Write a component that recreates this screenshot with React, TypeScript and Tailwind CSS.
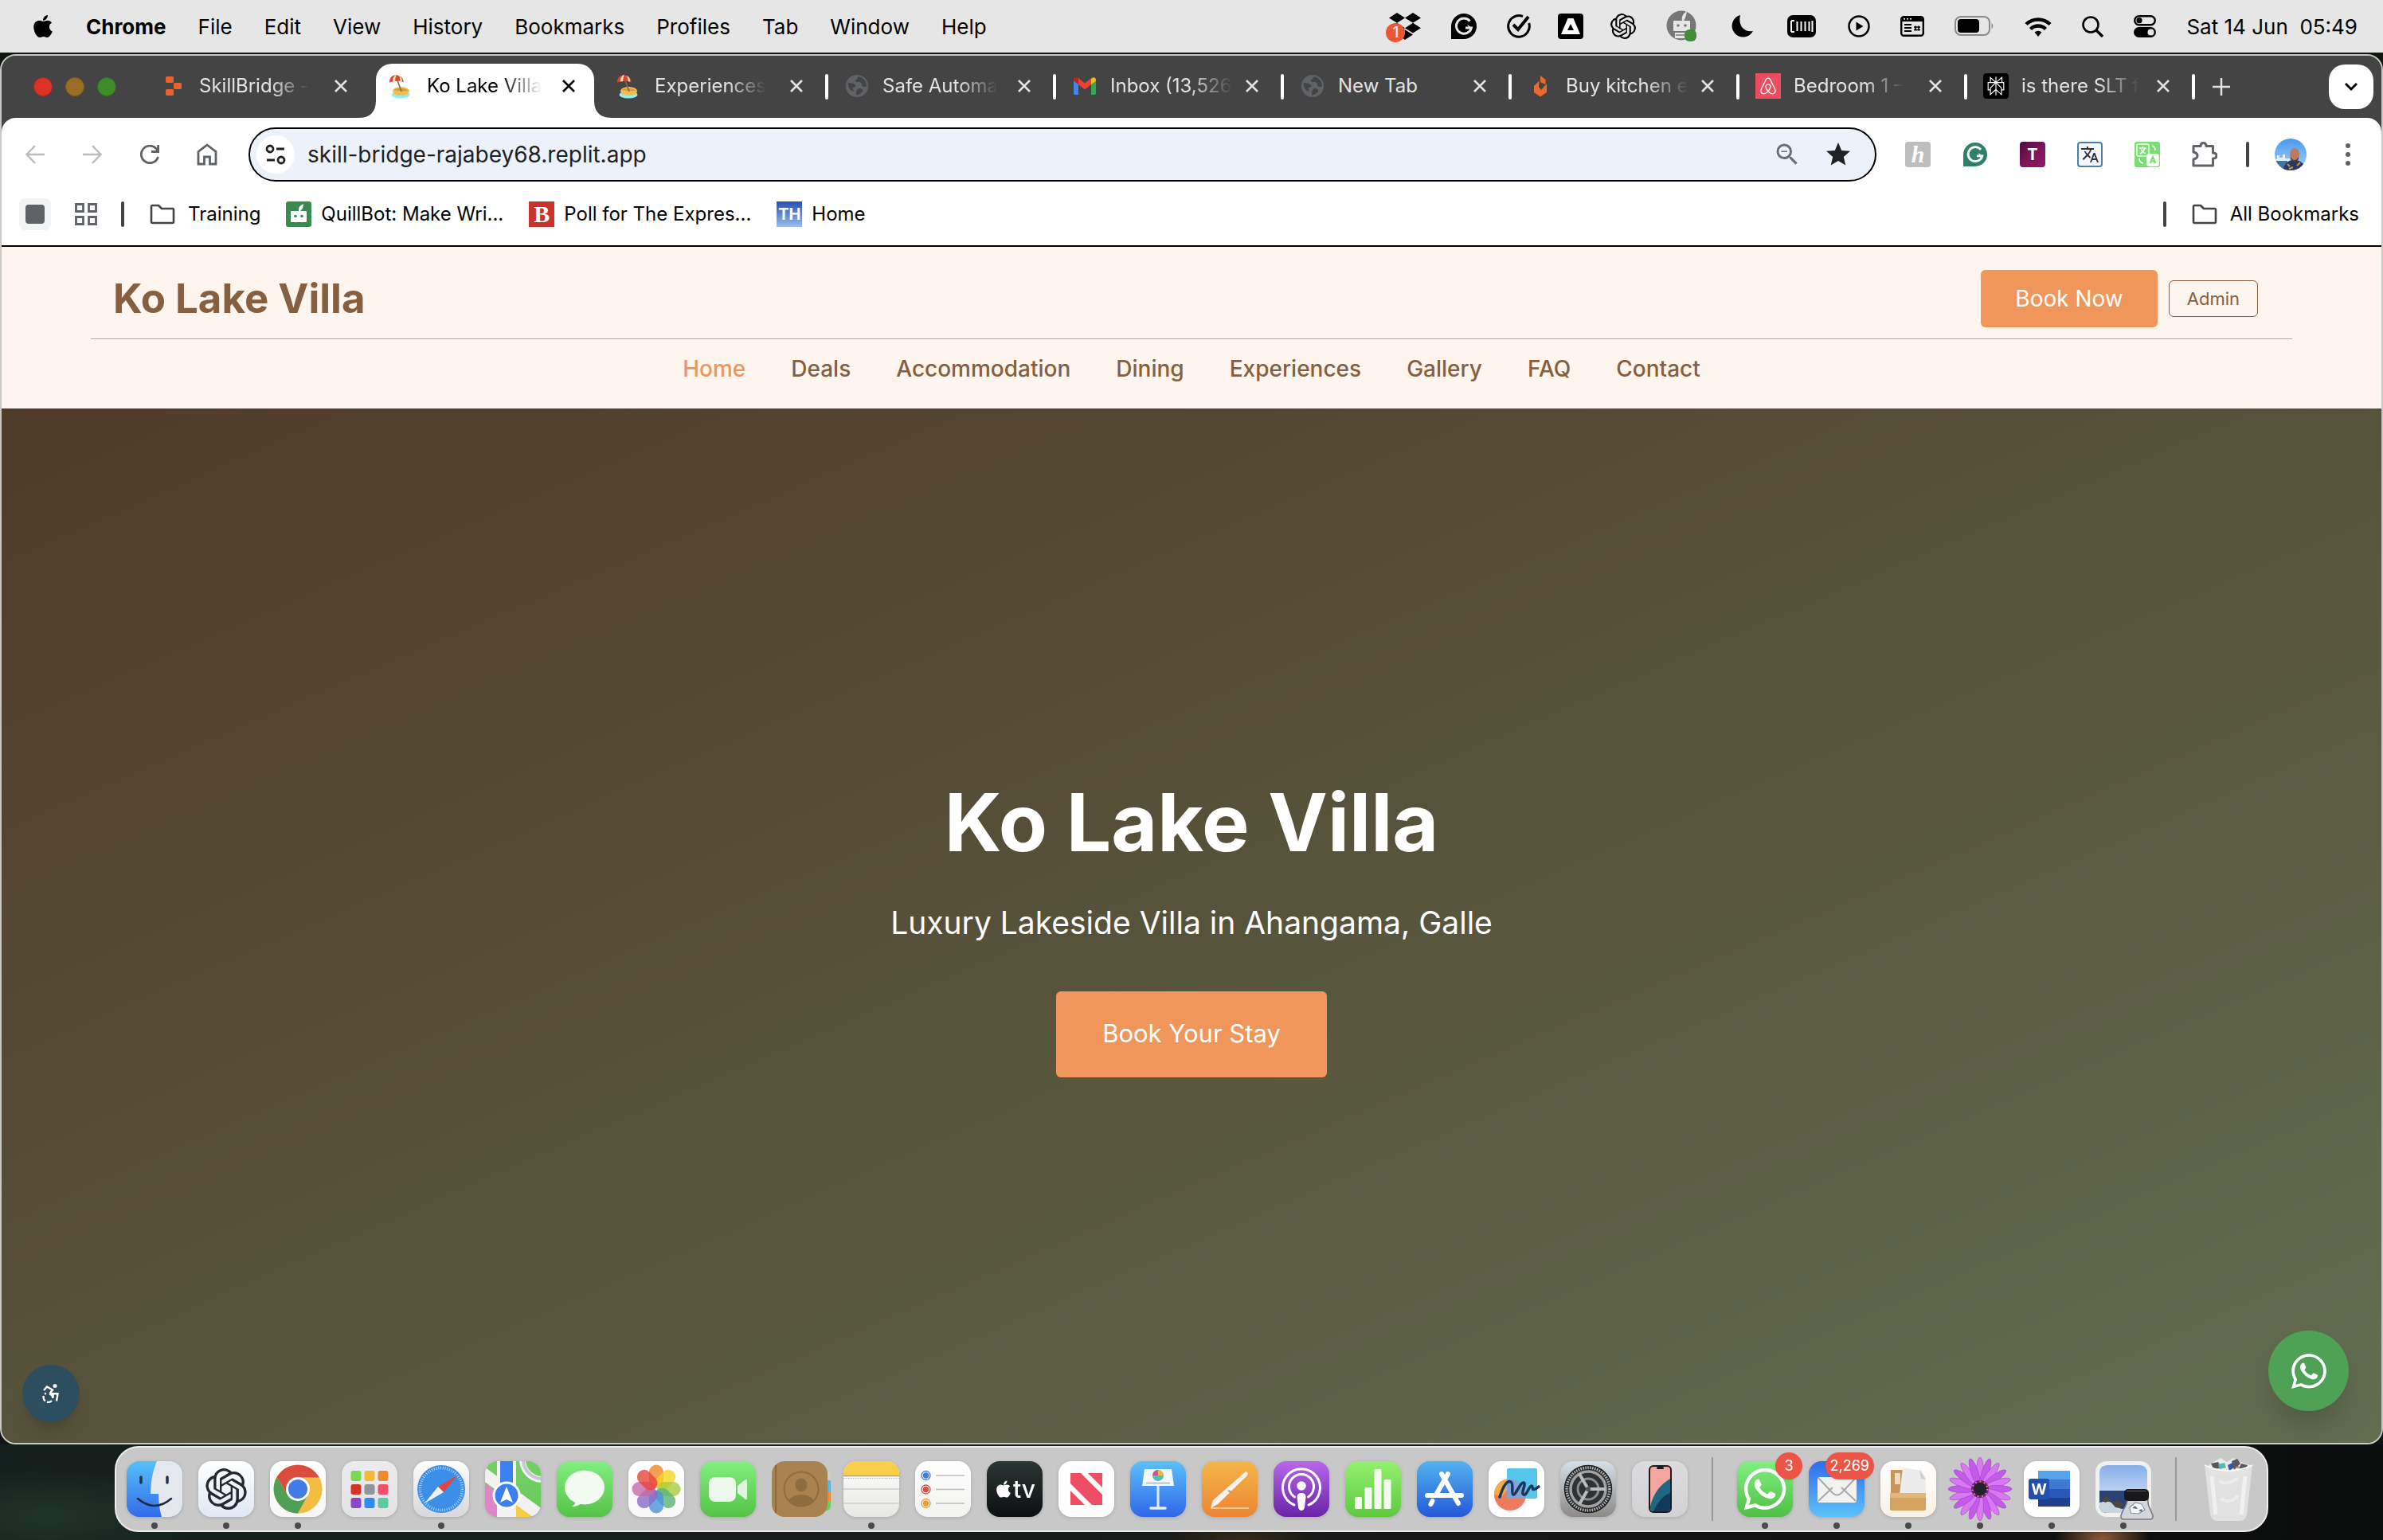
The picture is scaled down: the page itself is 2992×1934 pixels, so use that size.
import React from "react";
import { FaApple, FaWhatsapp, FaAirbnb, FaDropbox } from "react-icons/fa";
import { SiOpenai, SiPerplexity } from "react-icons/si";
import { MdZoomOut, MdStar, MdTranslate } from "react-icons/md";

type Kids = { children?: React.ReactNode };

const menus = ["File", "Edit", "View", "History", "Bookmarks", "Profiles", "Tab", "Window", "Help"];

/* ---------- menu bar ---------- */

function GrammarlyMark({ className, fill, ink }: { className: string; fill: string; ink: string }) {
  return (
    <svg viewBox="0 0 32 32" className={className}>
      <path d="M0 16a16 16 0 1 1 16 16H0z" fill={fill} />
      <path d="M23.5 9.5A9.6 9.6 0 1 0 25.4 18H18" fill="none" stroke={ink} strokeWidth="3" />
      <path d="M20 13.5l6 4.5-1 5z" fill={ink} />
    </svg>
  );
}

function RobotHead() {
  return (
    <svg viewBox="0 0 38 40" className="h-10 w-[38px]">
      <circle cx="19" cy="19" r="18.5" fill="#777" />
      <path d="M20 13c-1-5 1-9 6-12-1 6-2 9-4 12z" fill="#e6e6e6" />
      <rect x="9" y="13" width="21" height="13" rx="1" fill="#e6e6e6" />
      <circle cx="15" cy="19" r="1.8" fill="#777" />
      <circle cx="24" cy="19" r="1.8" fill="#777" />
      <path d="M11 28h16v7H11z" fill="#e6e6e6" />
      <path d="M12 31h14" stroke="#777" strokeWidth="1.5" />
      <rect x="23" y="24" width="15" height="15" rx="6" fill="#3f8f36" />
    </svg>
  );
}

function MenuBar() {
  return (
    <header className="flex h-[66px] shrink-0 items-center justify-between bg-[#e6e6e6] pr-8 pl-10 text-[26px] font-medium text-black">
      <nav className="flex items-center gap-10">
        <button aria-label="Apple menu" className="flex w-7 justify-center">
          <FaApple className="size-8 shrink-0" />
        </button>
        <button className="font-bold">Chrome</button>
        {menus.map((m) => (
          <button key={m} className="font-normal">{m}</button>
        ))}
      </nav>
      <div className="flex items-center gap-[38px]">
        <span className="relative flex w-10 justify-center">
          <FaDropbox className="size-10" />
          <span className="absolute top-4 -left-1 flex size-6 items-center justify-center rounded-full bg-[#ee5533] text-lg font-medium text-white">1</span>
        </span>
        <GrammarlyMark className="size-8" fill="#000" ink="#e6e6e6" />
        <svg viewBox="0 0 30 30" className="size-[30px]" fill="none" stroke="#000" strokeWidth="3">
          <path d="M20 2.6A13.3 13.3 0 1 0 27.7 11" />
          <path d="M8 13l6 6L27 3" strokeWidth="4" />
        </svg>
        <svg viewBox="0 0 32 32" className="-ml-1 size-8">
          <rect width="32" height="32" rx="4" fill="#000" />
          <path d="M12.5 6h7L28 26H4z" fill="#fff" />
          <path d="M16 13l4 8h-8z" fill="#000" />
        </svg>
        <SiOpenai className="-ml-1 size-8" />
        <RobotHead />
        <svg viewBox="0 0 28 28" className="ml-1.5 size-7"><path d="M11 0A14 14 0 1 0 27 20C15 22 8 12 11 0z" fill="#000" /></svg>
        <svg viewBox="0 0 36 28" className="ml-1 h-7 w-9">
          <rect width="36" height="28" rx="7" fill="#000" />
          <path d="M5 7v14M5 7h4M5 21h4M12.500 8v12M17.500 8v12M22.500 8v12M27.500 8v12" stroke="#fff" strokeWidth="2" />
          <path d="M31.500 7v14" stroke="#fff" strokeWidth="2" />
        </svg>
        <svg viewBox="0 0 28 28" className="ml-0.5 size-7">
          <circle cx="14" cy="14" r="12.500" fill="none" stroke="#000" strokeWidth="2.500" />
          <path d="M10.500 8.500l9 5.500-9 5.500z" fill="#000" />
        </svg>
        <svg viewBox="0 0 30 26" className="h-[26px] w-[30px]">
          <rect x="1.200" y="1.200" width="27.600" height="23.600" rx="3" fill="none" stroke="#000" strokeWidth="2.400" />
          <path d="M1 1h28v6H1z" fill="#000" />
          <path d="M4 3.800h2M8 3.800h2M12 3.800h2" stroke="#fff" strokeWidth="1.500" />
          <path d="M5 11h9M5 15h9M5 19h9" stroke="#000" strokeWidth="2" />
          <path d="M19 12.500v6M23 12.500v6M17 14h8M17 17.500h8" stroke="#000" strokeWidth="1.600" />
        </svg>
        <svg viewBox="0 0 50 26" className="h-[26px] w-[50px]">
          <rect x="1" y="1" width="43" height="23" rx="7" fill="none" stroke="#8a8a8a" strokeWidth="2" />
          <rect x="4" y="4" width="27" height="17" rx="4" fill="#000" />
          <path d="M46.500 8.500q3.500 4 0 8z" fill="#8a8a8a" />
        </svg>
        <svg viewBox="0 0 34 25" className="h-[25px] w-[34px]" fill="none" stroke="#000" strokeWidth="4.500">
          <path d="M2 9.500a21.500 21.500 0 0 1 30 0" />
          <path d="M7.500 15.500a13.500 13.500 0 0 1 19 0" />
          <path d="M12.500 19.500a6.500 6.500 0 0 1 9 0L17 25z" fill="#000" stroke="none" />
        </svg>
        <svg viewBox="0 0 27 27" className="size-[27px]" fill="none" stroke="#000" strokeWidth="2.600">
          <circle cx="11" cy="11" r="9.500" />
          <path d="M18 18l8 8" strokeWidth="3.400" />
        </svg>
        <svg viewBox="0 0 28 28" className="size-7">
          <rect x="1.200" y="1.200" width="25.600" height="11" rx="5.500" fill="none" stroke="#000" strokeWidth="2.400" />
          <circle cx="7" cy="6.700" r="3.600" fill="#000" />
          <rect y="15" width="28" height="13" rx="6.500" fill="#000" />
          <circle cx="21.500" cy="21.500" r="4" fill="#e6e6e6" />
        </svg>
        <span className="whitespace-pre font-normal">Sat 14 Jun  05:49</span>
      </div>
    </header>
  );
}

/* ---------- tab strip ---------- */

function Beach() {
  return (
    <svg viewBox="0 0 32 32" className="size-8">
      <ellipse cx="15" cy="27" rx="11.500" ry="4.500" fill="#8ff0f2" />
      <ellipse cx="15.500" cy="22.500" rx="10.500" ry="5.500" fill="#f2bd55" />
      <path d="M6 21q10-5 19 1-10 1-19-1z" fill="#d79a35" />
      <path d="M11 9l5 14" stroke="#8a6a3c" strokeWidth="1.600" />
      <path d="M1 11.500C1 4.500 6 1.500 11 2.500c5 1 8 4.500 7.500 9-3-2-5-2-7.500-1.500-3 0-7 0-10 1.500z" fill="#e0452f" />
      <path d="M8.500 2.300c-2.500 2-3.700 5-3.700 8.200l3.400-.5c0-3 .3-5.700 1.600-7.700z" fill="#fae3b8" />
      <path d="M12.500 2.800c1.500 2 2.200 4.500 2 7.200l2.500.8c.2-3.500-1-6-4.500-8z" fill="#fae3b8" />
    </svg>
  );
}
function Globe() {
  return (
    <svg viewBox="0 0 32 32" className="size-8">
      <circle cx="16" cy="16" r="14" fill="#5f6368" />
      <path d="M5 12c4 0 8 1 9 3s-1 3-3 3 2 4 0 5c-4-2-7-6-6-11zM17 4c0 4-4 4-3 6s5 0 7 2 0 4 3 5 4-1 4-1c0-6-4-11-11-12zM19 19c3 0 5 2 4 4s-5 4-8 5c1-2-1-3 0-5s2-4 4-4z" fill="#444" />
    </svg>
  );
}
function GmailMark() {
  return (
    <svg viewBox="0 0 32 32" className="size-8">
      <path d="M2 9v16a2 2 0 0 0 2 2h4V13z" fill="#4285f4" />
      <path d="M30 9v16a2 2 0 0 1-2 2h-4V13z" fill="#34a853" />
      <path d="M24 13V7l1-1a3 3 0 0 1 5 2.500V9.500L24 14z" fill="#fbbc04" />
      <path d="M8 14V6l8 6.500L24 6v8l-8 6.500z" fill="#ea4335" />
      <path d="M2 9.500V8.500A3 3 0 0 1 7 6l1 1v7z" fill="#c5221f" />
    </svg>
  );
}
function ReplitMark() {
  return (
    <svg viewBox="0 0 32 32" className="size-8" fill="#e8622c">
      <rect x="6" y="4" width="10" height="8" rx="1.500" />
      <rect x="16" y="12" width="10" height="8" rx="1.500" />
      <rect x="6" y="20" width="10" height="8" rx="1.500" />
    </svg>
  );
}
function FlameMark() {
  return (
    <svg viewBox="0 0 32 32" className="size-8" fill="#ee6a2c">
      <path d="M16 3l6.500 5v6l-6.500-3z" />
      <path d="M14.500 9.500L8 16v8l8 5.500L24 24V13l-7 8-3-4z" />
    </svg>
  );
}

const tabs: { label: string; icon: React.ReactNode; active?: boolean; bar?: boolean }[] = [
  { label: "SkillBridge -", icon: <ReplitMark /> },
  { label: "Ko Lake Villa", icon: <Beach />, active: true },
  { label: "Experiences", icon: <Beach /> },
  { label: "Safe Automa", icon: <Globe />, bar: true },
  { label: "Inbox (13,526", icon: <GmailMark />, bar: true },
  { label: "New Tab", icon: <Globe />, bar: true },
  { label: "Buy kitchen e", icon: <FlameMark />, bar: true },
  {
    label: "Bedroom 1 –",
    bar: true,
    icon: <span className="flex size-8 items-center justify-center bg-[#eb4c60] text-white"><FaAirbnb className="size-6" /></span>,
  },
  {
    label: "is there SLT f",
    bar: true,
    icon: <span className="flex size-8 items-center justify-center rounded-sm bg-black text-white"><SiPerplexity className="size-6" /></span>,
  },
];

function Cross() {
  return (
    <svg viewBox="0 0 16 16" className="size-4" stroke="currentColor" strokeWidth="2.500">
      <path d="M1 1l14 14M15 1L1 15" />
    </svg>
  );
}

function TabStrip() {
  return (
    <div className="bg-[#444]">
      <div className="flex h-[78px] items-center rounded-t-[18px] pr-2.5">
        <div className="flex w-[178px] shrink-0 gap-4 pl-10">
          <span className="size-6 rounded-full border border-[#b5261c] bg-[#dc3224]" />
          <span className="size-6 rounded-full border border-[#7d5a1c] bg-[#9a6e22]" />
          <span className="size-6 rounded-full border border-[#2f6f1f] bg-[#3d8c28]" />
        </div>
        {tabs.map((t) => (
          <div key={t.label} className="relative flex h-full w-[286px] min-w-0 items-center">
            {t.bar && <span className="absolute -left-0.5 h-8 w-1 rounded-xs bg-white" />}
            <div
              className={
                t.active
                  ? "relative mx-1.5 mt-2.5 flex h-[68px] min-w-0 flex-1 items-center rounded-t-[20px] bg-white pr-4 pb-3 pl-4 text-black"
                  : "flex min-w-0 flex-1 items-center px-[22px] pb-0.5 text-[#e3e3e3]"
              }
            >
              {t.active && (
                <>
                  <svg viewBox="0 0 22 22" className="absolute bottom-0 -left-[22px] size-[22px]"><path d="M22 0v22H0Q22 22 22 0z" fill="#fff" /></svg>
                  <svg viewBox="0 0 22 22" className="absolute -right-[22px] bottom-0 size-[22px]"><path d="M0 0v22h22Q0 22 0 0z" fill="#fff" /></svg>
                </>
              )}
              <button className="flex min-w-0 flex-1 items-center gap-4 text-left text-2xl">
                <span className="shrink-0">{t.icon}</span>
                <span className={t.label === "New Tab" ? "whitespace-nowrap" : "whitespace-nowrap [mask-image:linear-gradient(to_right,#000_65%,transparent)]"}>{t.label}</span>
              </button>
              <button aria-label={"Close " + t.label} className="shrink-0 pr-2"><Cross /></button>
            </div>
          </div>
        ))}
        <div className="relative flex flex-1 items-center justify-between pl-6">
          <span className="absolute -left-0.5 h-8 w-1 rounded-xs bg-white" />
          <button aria-label="New tab" className="text-[#e3e3e3]">
            <svg viewBox="0 0 22 22" className="size-[22px]" stroke="currentColor" strokeWidth="2.500"><path d="M11 0v22M0 11h22" /></svg>
          </button>
          <button aria-label="Search tabs" className="flex size-14 items-center justify-center rounded-[20px] bg-white text-black">
            <svg viewBox="0 0 18 12" className="h-3 w-[18px]" fill="none" stroke="currentColor" strokeWidth="3"><path d="M2 2l7 7 7-7" /></svg>
          </button>
        </div>
      </div>
    </div>
  );
}

/* ---------- toolbar ---------- */

function ToolButton({ label, children }: Kids & { label: string }) {
  return <button aria-label={label} className="flex size-8 items-center justify-center">{children}</button>;
}

function Avatar() {
  return (
    <svg viewBox="0 0 40 40" className="size-10">
      <defs>
        <clipPath id="avatarClip"><circle cx="20" cy="20" r="20" /></clipPath>
        <linearGradient id="avatarSky" x2="0" y2="1"><stop stopColor="#4a9af0" /><stop offset="1" stopColor="#a5d0f5" /></linearGradient>
      </defs>
      <g clipPath="url(#avatarClip)">
        <path d="M0 0h40v40H0z" fill="url(#avatarSky)" />
        <path d="M0 26h3v-5h3v3h4v-4h3v5h6v15H0z" fill="#e8eef2" />
        <path d="M0 28h16v12H0z" fill="#3f78a8" />
        <path d="M10 40q3-12 12-13h6q10 3 12 13z" fill="#26376a" />
        <path d="M16 32l3 3M28 34l4-4M18 38l5-2M31 38l3-2" stroke="#c9963e" strokeWidth="2" />
        <ellipse cx="25" cy="20" rx="6" ry="8" fill="#b97c5e" />
        <path d="M20 23q5 8 10 0v3q-5 6-10 0z" fill="#5b4238" />
      </g>
    </svg>
  );
}

function Toolbar() {
  return (
    <div className="flex h-[92px] items-center bg-white pr-[26px] pl-[26px] text-[#5f6368]">
      <div className="flex gap-10 pr-9">
        <ToolButton label="Back">
          <svg viewBox="0 0 24 24" className="size-6" fill="none" stroke="#bdbdbd" strokeWidth="2.500"><path d="M12 1L1.500 12 12 23M2 12h22" /></svg>
        </ToolButton>
        <ToolButton label="Forward">
          <svg viewBox="0 0 24 24" className="size-6" fill="none" stroke="#bdbdbd" strokeWidth="2.500"><path d="M12 1l10.500 11L12 23M22 12H0" /></svg>
        </ToolButton>
        <ToolButton label="Reload">
          <svg viewBox="0 0 24 24" className="size-6" fill="none" stroke="currentColor" strokeWidth="2.800"><path d="M22.500 15A10.800 10.800 0 1 1 20 4.500L22 7M22.600 0v8.500H14" /></svg>
        </ToolButton>
        <ToolButton label="Home">
          <svg viewBox="0 0 26 28" className="h-7 w-[26px]" fill="none" stroke="currentColor" strokeWidth="2.800"><path d="M2 10.500L13 2l11 8.500V26h-7.500v-9h-7v9H2z" /></svg>
        </ToolButton>
      </div>
      <form className="flex h-[68px] min-w-0 flex-1 items-center rounded-full border-2 border-black bg-[#edf1fa] pr-7 pl-2">
        <button type="button" aria-label="Site information" className="flex size-12 shrink-0 items-center justify-center rounded-full bg-white">
          <svg viewBox="0 0 26 26" className="size-[26px]" fill="none" stroke="#202124" strokeWidth="2.800">
            <circle cx="6" cy="6" r="4" /><path d="M14 6h10M2 20h10" /><circle cx="20" cy="20" r="4" />
          </svg>
        </button>
        <input aria-label="Address" defaultValue="skill-bridge-rajabey68.replit.app" className="ml-4 min-w-0 flex-1 bg-transparent text-[28px] text-[#202124] outline-none" />
        <button type="button" aria-label="Zoom" className="mr-7"><MdZoomOut className="size-9 text-[#6b6f74]" /></button>
        <button type="button" aria-label="Edit bookmark"><MdStar className="size-9 text-[#202124]" /></button>
      </form>
      <div className="flex items-center gap-10 pl-9">
        <button aria-label="Honey" className="flex size-8 items-center justify-center rounded bg-[#bdbdbd] font-['Liberation_Serif'] text-3xl font-bold text-white italic">h</button>
        <button aria-label="Grammarly" className="flex size-8 items-center justify-center"><GrammarlyMark className="size-[30px]" fill="#2f8068" ink="#fff" /></button>
        <button aria-label="Text extension" className="flex size-8 items-center justify-center rounded bg-linear-to-br from-[#4c0b3e] via-[#7d1458] to-[#8f1a66] text-xl font-bold text-white">T</button>
        <button aria-label="Translate" className="flex size-8 items-center justify-center rounded border-2 border-[#4a7fb0] bg-[#f2f6fa] text-[#333]"><MdTranslate className="size-6" /></button>
        <button aria-label="Translator">
          <svg viewBox="0 0 32 32" className="size-8" fill="none" stroke="#fff" strokeWidth="1.600">
            <rect width="32" height="32" rx="3" fill="#76e070" stroke="none" />
            <rect x="3" y="3" width="15" height="15" rx="2" />
            <rect x="16" y="16" width="14" height="14" rx="2" fill="#fff" />
            <path d="M6 8h9M10.500 6v2M13 8q-2 5-6 7M8 9.500q2 4 6 5.500M22 5q4 1 4 6M6 21q0 5 5 6" />
            <path d="M19.500 27L23 19l3.500 8M20.500 24.500h5" stroke="#76e070" strokeWidth="2" />
          </svg>
        </button>
        <button aria-label="Extensions">
          <svg viewBox="0 0 32 32" className="size-8" fill="none" stroke="#5f6368" strokeWidth="3">
            <path d="M2 5.500h9q0-4 3.500-4t3.500 4h8.500v8.500q4.500 0 4.500 3.500T26.500 21v9H2v-8q5-1 5-4.500T2 13z" strokeLinejoin="round" />
          </svg>
        </button>
        <span className="-ml-1 h-8 w-1 rounded bg-[#444]" />
        <button aria-label="Profile" className="-ml-2"><Avatar /></button>
        <button aria-label="More" className="-ml-1 flex w-8 flex-col items-center gap-[5px]">
          <span className="size-1.5 rounded-full bg-[#5f6368]" />
          <span className="size-1.5 rounded-full bg-[#5f6368]" />
          <span className="size-1.5 rounded-full bg-[#5f6368]" />
        </button>
      </div>
    </div>
  );
}

function Folder() {
  return (
    <svg viewBox="0 0 32 26" className="h-[26px] w-8" fill="none" stroke="#444" strokeWidth="2.600" strokeLinejoin="round">
      <path d="M2 3.500Q2 2 3.500 2H11l4 4h13.500Q30 6 30 7.500v15Q30 24 28.500 24h-25Q2 24 2 22.500z" />
    </svg>
  );
}

function BookmarkBar() {
  return (
    <nav aria-label="Bookmarks" className="flex h-[70px] items-center justify-between border-b-2 border-black bg-white pr-7 pb-2.5 pl-[22px] text-2xl text-black">
      <div className="flex items-center">
        <button aria-label="Saved group" className="flex size-10 items-center justify-center rounded-lg bg-[#f1f3f4]"><span className="size-6 rounded bg-[#5f6368]" /></button>
        <button aria-label="Tab groups" className="ml-[30px]">
          <svg viewBox="0 0 28 28" className="size-7" fill="none" stroke="#5f6368" strokeWidth="2.800">
            <path d="M1.500 1.500h9v9h-9zM17.500 1.500h9v9h-9zM1.500 17.500h9v9h-9zM17.500 17.500h9v9h-9z" />
          </svg>
        </button>
        <span className="mr-8 ml-[30px] h-8 w-1 rounded bg-[#444]" />
        <div className="flex items-center gap-8">
          <a href="#training" className="flex items-center gap-4"><Folder />Training</a>
          <a href="#quillbot" className="flex items-center gap-3">
            <svg viewBox="0 0 32 32" className="size-8">
              <rect width="32" height="32" rx="3" fill="#3a8a50" />
              <path d="M16 12q-1-6 6-9 0 6-4 9z" fill="#fff" />
              <rect x="6" y="12" width="20" height="14" rx="1" fill="#fff" />
              <circle cx="12" cy="18.500" r="1.800" fill="#3a8a50" /><circle cx="20" cy="18.500" r="1.800" fill="#3a8a50" />
            </svg>
            QuillBot: Make Wri...
          </a>
          <a href="#poll" className="flex items-center gap-3">
            <span className="flex size-8 items-center justify-center bg-[#c8332a] font-['Liberation_Serif'] text-3xl font-bold text-white">B</span>
            Poll for The Expres...
          </a>
          <a href="#home" className="flex items-center gap-3">
            <span className="flex size-8 items-center justify-center bg-linear-to-b from-[#2350b0] to-[#9fbcea] text-xl font-bold text-white">TH</span>
            Home
          </a>
        </div>
      </div>
      <div className="flex items-center">
        <span className="mr-8 h-8 w-1 rounded bg-[#444]" />
        <a href="#all" className="flex items-center gap-4"><Folder />All Bookmarks</a>
      </div>
    </nav>
  );
}

/* ---------- site ---------- */

const links = ["Home", "Deals", "Accommodation", "Dining", "Experiences", "Gallery", "FAQ", "Contact"];

function Site() {
  return (
    <div className="flex flex-1 flex-col">
      <header className="h-[203px] bg-[#fdf5ee] px-28 pt-[15px] text-[#855f40]">
        <div className="flex h-[101px] items-center justify-between border-b border-[#a9b78d] pr-[43px] pl-7">
          <a href="#top" className="text-[51px] font-bold">Ko Lake Villa</a>
          <div className="flex items-center gap-3.5">
            <button className="h-[72px] rounded-md bg-[#f0965a] px-[43px] text-[28px] text-white">Book Now</button>
            <button className="h-[46px] rounded-md border border-[#855f40] px-[22px] text-[22px]">Admin</button>
          </div>
        </div>
        <nav className="flex h-[74px] items-center justify-center gap-[57px] text-[28px] font-medium">
          {links.map((l) => (
            <a key={l} href={"#" + l.toLowerCase()} className={l === "Home" ? "text-[#ee965e]" : ""}>{l}</a>
          ))}
        </nav>
      </header>
      <main className="relative flex flex-1 flex-col items-center justify-center rounded-b-[18px] bg-linear-to-br from-[#503a28] via-[#57533b] to-[#626e51] text-white">
        <h1 className="text-[100px] leading-[120px] font-bold">Ko Lake Villa</h1>
        <p className="mt-9 text-[39px] leading-[60px]">Luxury Lakeside Villa in Ahangama, Galle</p>
        <button className="mt-14 h-[108px] rounded-md bg-[#f0965a] px-[58px] text-[31px]">Book Your Stay</button>
        <button aria-label="Accessibility" className="absolute bottom-[26px] left-[26px] flex size-[72px] items-center justify-center rounded-full bg-[#2c4e5f] shadow-xl">
          <svg viewBox="0 0 22 24" className="h-6 w-[22px]" fill="none" stroke="#fff" strokeWidth="2.400">
            <circle cx="16" cy="2.600" r="2.500" fill="#fff" stroke="none" />
            <path d="M2 8l4-4.500 7 4-3.500 4.500M9 12.200h10.500L18 21.500M14 12l-1 6" />
            <path d="M9 12.500q4 1 4.500 5M1.800 15q-1 4 2 6.500M6 22.700q3.500.8 6-1.700M3 12.800l2-1" />
          </svg>
        </button>
        <button aria-label="Chat on WhatsApp" className="absolute right-[41px] bottom-10 flex size-[101px] items-center justify-center rounded-full bg-[#4ea155] shadow-2xl">
          <FaWhatsapp className="size-[50px]" />
        </button>
      </main>
    </div>
  );
}

/* ---------- dock ---------- */

function Tile({ id, from, to, children }: Kids & { id: string; from: string; to: string }) {
  return (
    <svg viewBox="0 0 70 70" className="size-[70px] overflow-visible drop-shadow-sm">
      <defs>
        <linearGradient id={id} x2="0" y2="1"><stop stopColor={from} /><stop offset="1" stopColor={to} /></linearGradient>
        <clipPath id={id + "Clip"}><rect width="70" height="70" rx="16" /></clipPath>
      </defs>
      <rect width="70" height="70" rx="16" fill={`url(#${id})`} />
      <g clipPath={`url(#${id}Clip)`}>{children}</g>
    </svg>
  );
}

const petals = ["#f08a24", "#f2d723", "#a9cc3c", "#5bb573", "#4a93dd", "#8a6cc8", "#c46aa8", "#e8453c"];
const pads = ["#7ad94f", "#f5b93a", "#ee8a2e", "#d2342a", "#8f9699", "#f0506a", "#8c46c8", "#2f8cf0", "#5cc9a0"];
const range = (n: number) => Array.from({ length: n }, (_, i) => i);

function FinderIcon() {
  return (
    <Tile id="finder" from="#55c1f8" to="#336bea">
      <path d="M38 0Q30 18 30 41h10q0 16 4 29h26V0z" fill="#e4e8ee" />
      <path d="M18 20v7M51 20v7" stroke="#23324a" strokeWidth="3.500" strokeLinecap="round" />
      <path d="M14 47q21 18 42 0" fill="none" stroke="#1c2a40" strokeWidth="2.500" strokeLinecap="round" />
    </Tile>
  );
}
function GptIcon() {
  return (
    <Tile id="gpt" from="#fff" to="#dfe8f4">
      <foreignObject x="9" y="9" width="52" height="52"><SiOpenai className="size-[52px] text-[#222a30]" /></foreignObject>
    </Tile>
  );
}
function ChromeIcon() {
  return (
    <Tile id="chrome" from="#fff" to="#f7f7f7">
      <circle cx="35" cy="35" r="30.500" fill="#f3bd42" />
      <path d="M8.600 20A30.500 30.500 0 0 1 61.400 20H35L22 42z" fill="#db4c3f" />
      <path d="M8.600 20A30.500 30.500 0 0 0 35 65.500L48 42 35 35 22 42z" fill="#4f9f57" />
      <path d="M35 65.500L48 42.500A15 15 0 0 0 48 27.500L46 20h15.400A30.500 30.500 0 0 1 35 65.500z" fill="#f3bd42" />
      <path d="M35 20h26.400" stroke="#db4c3f" strokeWidth="1" />
      <circle cx="35" cy="35" r="15" fill="#fff" />
      <circle cx="35" cy="35" r="12" fill="#447be8" />
    </Tile>
  );
}
function LaunchpadIcon() {
  return (
    <Tile id="pad" from="#ececee" to="#e2e2e4">
      {pads.map((c, i) => (
        <rect key={c} x={11.500 + (i % 3) * 17} y={12 + Math.floor(i / 3) * 17} width="13" height="13" rx="3" fill={c} />
      ))}
    </Tile>
  );
}
function SafariIcon() {
  return (
    <Tile id="safari" from="#fdfdfd" to="#d8d8da">
      <circle cx="35" cy="35" r="30" fill="#3b8fe8" />
      <circle cx="35" cy="35" r="26.500" fill="none" stroke="#cfe4fa" strokeWidth="3.500" strokeDasharray="0.800 2" />
      <path d="M56 17L31 32l7 7z" fill="#e0483e" />
      <path d="M14 53l17-21 7 7z" fill="#f2f2f2" />
    </Tile>
  );
}
function MapsIcon() {
  return (
    <Tile id="maps" from="#72d163" to="#6ac95c">
      <path d="M0 28l16 12v30H0z" fill="#e284c8" />
      <path d="M39 52l24 18H39z" fill="#f7cb46" />
      <path d="M-4 14l78 57" stroke="#f2f2f4" strokeWidth="15" />
      <path d="M15 0h24v70H15z" fill="#f2f2f4" />
      <path d="M19 0h16v36H19z" fill="#3b82f0" />
      <circle cx="72" cy="-2" r="25" fill="none" stroke="#f2f2f4" strokeWidth="8" />
      <circle cx="72" cy="-2" r="24" fill="none" stroke="#c6c9cf" strokeWidth="4" />
      <circle cx="27" cy="43" r="17.500" fill="#fff" />
      <circle cx="27" cy="43" r="14.500" fill="#3b7ff0" />
      <path d="M27 32l8 20-8-4-8 4z" fill="#fff" />
    </Tile>
  );
}
function MessagesIcon() {
  return (
    <Tile id="messages" from="#82ef80" to="#55c247">
      <ellipse cx="35" cy="33" rx="25" ry="21.500" fill="#f3faf1" />
      <path d="M24 49q0 5-5 8 8 0 13-5z" fill="#f3faf1" />
    </Tile>
  );
}
function PhotosIcon() {
  return (
    <Tile id="photos" from="#fff" to="#f8f8f8">
      {petals.map((c, i) => (
        <rect key={c} x="26" y="4.500" width="18" height="29" rx="9" fill={c} opacity="0.800" transform={`rotate(${i * 45} 35 35)`} />
      ))}
    </Tile>
  );
}
function FaceTimeIcon() {
  return (
    <Tile id="facetime" from="#82ef80" to="#55c247">
      <rect x="11" y="20" width="34" height="31" rx="8" fill="#eef7ec" />
      <path d="M47 31l10-8q2-1 2 2v21q0 3-2 2l-10-8z" fill="#e4f2e1" />
    </Tile>
  );
}
function ContactsIcon() {
  return (
    <svg viewBox="0 0 70 70" className="size-[70px] overflow-visible">
      <path d="M66 12h4a4 4 0 0 1 4 4v8h-8z" fill="#ccc" /><path d="M66 24h8v14h-8z" fill="#57b6ee" />
      <path d="M66 38h8v12h-8z" fill="#ee8d33" /><path d="M66 50h8v6q0 5-4 6h-4z" fill="#6ccf5f" />
      <rect width="70" height="70" rx="16" fill="#a98250" />
      <path d="M5 5v60" stroke="#8c683c" strokeWidth="2" />
      <circle cx="37" cy="35" r="21.500" fill="none" stroke="#8f6c3e" strokeWidth="2" />
      <ellipse cx="37" cy="30" rx="7.500" ry="8.500" fill="#8f6c3e" />
      <path d="M21 50q4-8 16-8t16 8q-6 7-16 7t-16-7z" fill="#8f6c3e" />
    </svg>
  );
}
function NotesIcon() {
  return (
    <Tile id="notes" from="#fefefe" to="#e7e7e3">
      <path d="M0 0h70v18H0z" fill="#f9cf48" />
      <path d="M0 18.500h70" stroke="#a8a294" strokeWidth="1.500" />
      <path d="M0 21.500h70" stroke="#bbb" strokeDasharray="1.500 1.500" />
      <path d="M0 35h70M0 53h70" stroke="#cfcfcf" strokeWidth="1.500" />
    </Tile>
  );
}
function RemindersIcon() {
  return (
    <Tile id="reminders" from="#fff" to="#f2f2f0">
      {["#3b7cf0", "#e8493c", "#f09a32"].map((c, i) => (
        <g key={c}>
          <circle cx="13.500" cy={18 + i * 17.500} r="5.500" fill="none" stroke={c} strokeWidth="1.300" />
          <circle cx="13.500" cy={18 + i * 17.500} r="3.700" fill={c} />
          <path d={`M26 ${18 + i * 17.500}h36`} stroke="#bdbdbf" strokeWidth="1.600" />
        </g>
      ))}
    </Tile>
  );
}
function TvIcon() {
  return (
    <Tile id="tv" from="#2c3634" to="#0c0f12">
      <foreignObject x="0" y="0" width="70" height="70">
        <div className="flex h-[70px] items-center justify-center text-white"><FaApple className="size-6" /><span className="text-[30px] font-medium">tv</span></div>
      </foreignObject>
    </Tile>
  );
}
function NewsIcon() {
  return (
    <Tile id="news" from="#fff" to="#fdfdfd">
      <path d="M15 15h13l27 27v13H42L15 28z" fill="#ee4d64" />
      <path d="M37 15h18v18zM15 37v18h18z" fill="#ee4d64" />
    </Tile>
  );
}
function KeynoteIcon() {
  return (
    <Tile id="keynote" from="#5cc0f9" to="#2f67ea">
      <path d="M18 10h34l3 21H15z" fill="#f4f7fb" />
      <circle cx="35" cy="18" r="7" fill="#4fc1b8" /><path d="M35 18V11a7 7 0 0 1 7 7z" fill="#f0bc3c" /><path d="M35 18h-7a7 7 0 0 1 7-7z" fill="#cf4fa0" />
      <path d="M20 27.500h30" stroke="#a7b4c4" strokeWidth="1.500" />
      <path d="M35 31v27" stroke="#e7edf5" strokeWidth="3" /><path d="M26 59h18" stroke="#e7edf5" strokeWidth="3.500" strokeLinecap="round" />
    </Tile>
  );
}
function PagesIcon() {
  return (
    <Tile id="pages" from="#f5b648" to="#ec8534">
      <path d="M55 13q4 1 2 5L20 54l-9 5 3-10z" fill="#f7f3ee" />
      <path d="M33 37l4 2" stroke="#a7a19a" strokeWidth="2" /><path d="M11 59h48" stroke="#fbd9ac" strokeWidth="1.600" />
    </Tile>
  );
}
function PodcastsIcon() {
  return (
    <Tile id="podcasts" from="#b767ea" to="#6a23a8">
      <g fill="none" stroke="#fff" strokeWidth="3" strokeLinecap="round">
        <path d="M26 55a23.500 23.500 0 1 1 18 0" /><path d="M26.500 45a15.500 15.500 0 1 1 17 0" />
      </g>
      <circle cx="35" cy="31" r="5.800" fill="#fff" /><path d="M29.500 45q0-5 5.500-5t5.500 5l-1.500 13q-1 4-4 4t-4-4z" fill="#fff" />
    </Tile>
  );
}
function NumbersIcon() {
  return (
    <Tile id="numbers" from="#95f070" to="#5dc93e">
      {[[12, 45, 15], [24.500, 33, 27], [36.500, 10, 50], [48.500, 23, 37]].map(([x, y, h]) => (
        <rect key={x} x={x} y={y} width="9" height={h} rx="1.500" fill="#f4fbf1" />
      ))}
    </Tile>
  );
}
function StoreIcon() {
  return (
    <Tile id="store" from="#51b3f0" to="#2558d8">
      <g stroke="#fff" strokeWidth="6" strokeLinecap="round"><path d="M39 16L23.500 43M31 16l21 37M13 43h43M19.500 50l-2 4" /></g>
    </Tile>
  );
}
function FreeformIcon() {
  return (
    <Tile id="freeform" from="#fff" to="#fff">
      <circle cx="27" cy="42" r="20" fill="#f07a5c" /><path d="M7 42a20 20 0 0 1 20-20l6 2-16 20z" fill="#f4a94a" />
      <rect x="23" y="9" width="38" height="38" rx="2" fill="#58c5ec" /><path d="M23 23a20 20 0 0 1 23 24H23z" fill="#82a4d4" />
      <path d="M14 45C19 29 24 24 28 26S28 41 31 42 40 26 44 27 40 40 44 42 51 30 54 31 52 40 63 32" fill="none" stroke="#17385f" strokeWidth="3.500" strokeLinecap="round" />
    </Tile>
  );
}
function SettingsIcon() {
  return (
    <Tile id="settings" from="#d4dfe8" to="#8c8a88">
      <circle cx="35" cy="35" r="29" fill="#2f3133" stroke="#1c1d1e" strokeWidth="2.500" />
      <circle cx="35" cy="35" r="27" fill="none" stroke="#b4b6b8" strokeWidth="3.500" strokeDasharray="1.500 1.500" />
      <circle cx="35" cy="35" r="22" fill="none" stroke="#a0a2a4" strokeWidth="3.500" />
      <circle cx="35" cy="35" r="13" fill="none" stroke="#8a8c8e" strokeWidth="3" />
      <path d="M35 35h22M35 35L24 16M35 35L24 54" stroke="#b9bbbd" strokeWidth="4" />
      <circle cx="35" cy="35" r="3" fill="#505254" />
    </Tile>
  );
}
function MirrorIcon() {
  return (
    <Tile id="mirror" from="#dcdcde" to="#d2d2d4">
      <rect x="21" y="5" width="29" height="60" rx="6" fill="#1a1c20" />
      <rect x="23" y="7" width="25" height="56" rx="4" fill="#f2a69e" />
      <path d="M48 22Q28 34 23 57v2q0 4 4 4h17q4 0 4-4z" fill="#1f6680" />
      <path d="M48 40Q36 44 27 63h17q4 0 4-4z" fill="#123a58" />
      <rect x="31" y="7" width="9" height="3" rx="1.500" fill="#1a1c20" />
    </Tile>
  );
}
function WhatsIcon() {
  return (
    <Tile id="whats" from="#82ef80" to="#4fbf45">
      <foreignObject x="5" y="5" width="60" height="60"><FaWhatsapp className="size-[60px] text-white" /></foreignObject>
    </Tile>
  );
}
function MailIcon() {
  return (
    <Tile id="mail" from="#2f6cf0" to="#5cc2fa">
      <rect x="11" y="20" width="49" height="32" rx="3" fill="#f2f2f2" />
      <path d="M12 50l18-17M59 50L41 33M12 21l18 19q5.500 5 11 0l18-19" fill="none" stroke="#a9a9ab" strokeWidth="2" />
    </Tile>
  );
}
function BoxIcon() {
  return (
    <Tile id="box" from="#fff" to="#fbf1e6">
      <path d="M13 11h34v30H13z" fill="#c8955a" /><path d="M18 15h7v14h-7z" fill="#eadbc4" />
      <path d="M28 8l24 4 5 10v20H24z" fill="#ececec" /><path d="M49 11l2 11 6 1z" fill="#cfcfcf" />
      <path d="M12 40h45v20q0 2-2 2H14q-2 0-2-2z" fill="#d5a35f" /><path d="M12 40h45v6H12z" fill="#e2b778" />
    </Tile>
  );
}
function DaisyIcon() {
  return (
    <svg viewBox="0 0 80 80" className="size-20 overflow-visible">
      {range(20).map((i) => (
        <ellipse key={i} cx="40" cy="18" rx="4.500" ry="18" fill={i % 2 ? "#c55ae8" : "#d879f3"} stroke="#a23fc8" strokeWidth="0.600" transform={`rotate(${i * 18} 40 40)`} />
      ))}
      <circle cx="40" cy="40" r="11" fill="#6b1f80" /><circle cx="40" cy="40" r="8" fill="#22222c" />
      <circle cx="40" cy="40" r="9.500" fill="none" stroke="#e0a83c" strokeWidth="2" strokeDasharray="1.500 4" />
    </svg>
  );
}
function WordIcon() {
  return (
    <Tile id="word" from="#fff" to="#fdfdfd">
      <path d="M18 12h40v12H18z" fill="#57a3ea" /><path d="M18 23h40v12H18z" fill="#3d78d2" /><path d="M18 35h40v11H18z" fill="#2a57b8" /><path d="M18 46h40v11H18z" fill="#1f3f8c" />
      <rect x="6" y="22" width="26" height="26" rx="3" fill="#2350b0" />
      <text x="19" y="42" textAnchor="middle" fontSize="19" fontWeight="700" fill="#fff" fontFamily="Inter">W</text>
    </Tile>
  );
}
function PreviewIcon() {
  return (
    <svg viewBox="0 0 70 70" className="size-[70px] overflow-visible">
      <defs><linearGradient id="previewSky" x2="0" y2="1"><stop stopColor="#86aee8" /><stop offset="1" stopColor="#bcd0f2" /></linearGradient></defs>
      <rect width="70" height="70" rx="14" fill="#f0f0ee" />
      <path d="M5 37V15Q5 5 15 5h40q10 0 10 10v22z" fill="url(#previewSky)" />
      <path d="M5 37h60v18q0 10-10 10H15Q5 65 5 55z" fill="#2c4274" />
      <path d="M5 52q12-4 18 2t12 6l3 5H15Q5 65 5 55z" fill="#c9d4dc" /><path d="M7 47l8-3 5 5-8 3zM20 52l8-3 8 5-5 5-6-1z" fill="#4d463f" />
      <path d="M40 48q0 6-5 13l-3 7q-1 5 4 5h32q5 0 4-5l-3-7q-4-7-3-13z" fill="#d3d7dd" stroke="#77797d" strokeWidth="1.600" />
      <path d="M43 58l7-6 8 2 4 7-8 5-10-1z" fill="#f4f5f7" stroke="#8d949d" strokeWidth="1.200" />
      <path d="M46 59l4-3 3 4zM54 62l4-2 1 4z" fill="#51708c" />
      <rect x="36" y="35" width="31" height="15" rx="5" fill="#18181a" />
      <path d="M39 37.500h25" stroke="#4a4a4d" strokeWidth="1.500" />
    </svg>
  );
}
function TrashIcon() {
  return (
    <svg viewBox="0 0 60 80" className="h-20 w-[60px] overflow-visible">
      <path d="M3 12l8-6 9-5 8 5 8-5 9 5 12 4-4 13H7z" fill="#e9e9e9" />
      <path d="M8 8l9-2 4 7-9 3zM34 5l7-3 4 6-8 8zM46 8l8 2-3 6-8-2z" fill="#55585c" />
      <path d="M17 9l8-2 2 6-8 2z" fill="#58b8b0" /><path d="M29 10l6-3 2 6-6 4z" fill="#3459a8" /><path d="M38 12l4-2 1 4z" fill="#c8553a" />
      <path d="M0 10q30 14 60 0l-7 62q-2 8-9 8H16q-7 0-9-8z" fill="#e3e3e3" opacity="0.950" />
      <path d="M9 24l5 48M51 24l-5 48" stroke="#f8f8f8" strokeWidth="5" opacity="0.700" /><path d="M0 10q30 14 60 0" fill="none" stroke="#fafafa" strokeWidth="1.500" />
      <path d="M18 30q10 6 24-4M20 52q12 8 22-4" fill="none" stroke="#f4f4f4" strokeWidth="4" opacity="0.600" />
    </svg>
  );
}

const apps: { name: string; icon: React.ReactNode; open?: boolean; badge?: string }[] = [
  { name: "Finder", icon: <FinderIcon />, open: true },
  { name: "ChatGPT", icon: <GptIcon />, open: true },
  { name: "Google Chrome", icon: <ChromeIcon />, open: true },
  { name: "Launchpad", icon: <LaunchpadIcon /> },
  { name: "Safari", icon: <SafariIcon />, open: true },
  { name: "Maps", icon: <MapsIcon /> },
  { name: "Messages", icon: <MessagesIcon /> },
  { name: "Photos", icon: <PhotosIcon /> },
  { name: "FaceTime", icon: <FaceTimeIcon /> },
  { name: "Contacts", icon: <ContactsIcon /> },
  { name: "Notes", icon: <NotesIcon />, open: true },
  { name: "Reminders", icon: <RemindersIcon /> },
  { name: "TV", icon: <TvIcon /> },
  { name: "News", icon: <NewsIcon /> },
  { name: "Keynote", icon: <KeynoteIcon /> },
  { name: "Pages", icon: <PagesIcon /> },
  { name: "Podcasts", icon: <PodcastsIcon /> },
  { name: "Numbers", icon: <NumbersIcon /> },
  { name: "App Store", icon: <StoreIcon /> },
  { name: "Freeform", icon: <FreeformIcon /> },
  { name: "System Settings", icon: <SettingsIcon /> },
  { name: "iPhone Mirroring", icon: <MirrorIcon /> },
];
const recent: typeof apps = [
  { name: "WhatsApp", icon: <WhatsIcon />, open: true, badge: "3" },
  { name: "Mail", icon: <MailIcon />, open: true, badge: "2,269" },
  { name: "Archive", icon: <BoxIcon />, open: true },
  { name: "Daisy", icon: <DaisyIcon />, open: true },
  { name: "Word", icon: <WordIcon />, open: true },
  { name: "Preview", icon: <PreviewIcon />, open: true },
];

function DockItem({ app }: { app: (typeof apps)[number] }) {
  return (
    <button aria-label={app.name} className="relative flex h-[104px] w-[90px] items-center justify-center">
      {app.icon}
      {app.badge && (
        <span className="absolute top-1.5 -right-0.5 flex h-[34px] min-w-[34px] items-center justify-center rounded-full bg-[#ec5545] px-1.5 text-lg text-white shadow">{app.badge}</span>
      )}
      {app.open && <span className="absolute bottom-0.5 left-[41px] size-2 rounded-full bg-[#4a4a4a]" />}
    </button>
  );
}

function Dock() {
  return (
    <footer className="flex h-[120px] shrink-0 justify-center bg-[radial-gradient(60px_30px_at_2640px_118px,#8a5a38,transparent),radial-gradient(90px_20px_at_1560px_120px,#3a2a1c,transparent),radial-gradient(200px_60px_at_60px_90px,#20352a,transparent),linear-gradient(to_right,#14201d,#191c18_50%,#0b0c0c)] pt-0.5">
      <div className="flex h-[108px] items-center rounded-[30px] border-2 border-[#ececec] bg-[#c8c8c8] px-[3px]">
        {apps.map((a) => <DockItem key={a.name} app={a} />)}
        <span className="mx-5 h-20 w-0.5 bg-[#999]" />
        {recent.map((a) => <DockItem key={a.name} app={a} />)}
        <span className="mx-5 h-20 w-0.5 bg-[#999]" />
        <DockItem app={{ name: "Trash", icon: <TrashIcon /> }} />
      </div>
    </footer>
  );
}

export default function App() {
  return (
    <div className="flex min-h-screen w-full flex-col bg-[#101512] font-['Inter',sans-serif]">
      <MenuBar />
      <div className="mt-0.5 flex flex-1 flex-col overflow-hidden rounded-[20px] border-2 border-[#c9cbc2] bg-[#444]">
        <TabStrip />
        <div className="overflow-hidden rounded-t-[18px]">
          <Toolbar />
          <BookmarkBar />
        </div>
        <Site />
      </div>
      <Dock />
    </div>
  );
}
